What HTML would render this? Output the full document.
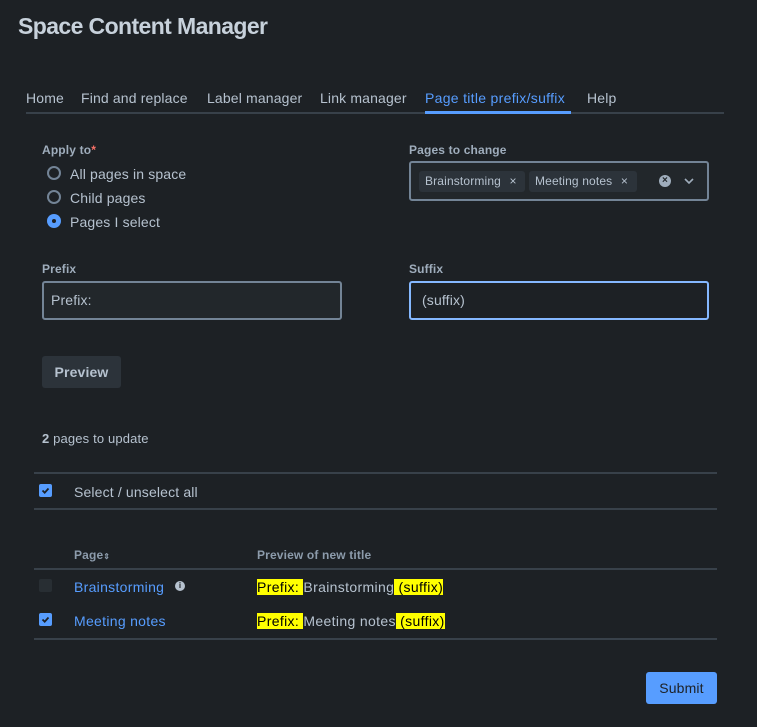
<!DOCTYPE html>
<html><head><style>
body{margin:0;width:757px;height:727px;background:#1d2125;font-family:"Liberation Sans",sans-serif;color:#b6c2cf;position:relative;overflow:hidden;font-size:14px;letter-spacing:0.15px}
.a{position:absolute;white-space:nowrap}
.lbl{font-size:12px;font-weight:bold;color:#9fadbc}
.radio{position:absolute;width:10px;height:10px;border:2px solid #738496;border-radius:50%}
.inp{position:absolute;height:36px;border:2px solid #738496;border-radius:3px;box-sizing:border-box;padding:0 8px;line-height:32px;color:#b6c2cf;background:#22272b}
.line{position:absolute;left:34px;width:683px;height:2px;background:#38414a}
.cb{position:absolute;width:13px;height:13px;border-radius:2px;background:#579dff}
.cb svg{position:absolute;left:0;top:0}
.hl{background:#ff0;color:#000}
.link{color:#579dff}
.tag{position:absolute;top:171px;height:21px;background:#2c333a;border-radius:3px;font-size:12px;line-height:21px;padding-left:6px;box-sizing:border-box}
</style></head><body>
<div class="a" style="left:18px;top:13px;font-size:23px;color:#c7d1db;font-weight:bold;letter-spacing:-0.6px">Space Content Manager</div>
<div class="a" style="left:26px;top:90px">Home</div>
<div class="a" style="left:81px;top:90px">Find and replace</div>
<div class="a" style="left:207px;top:90px">Label manager</div>
<div class="a" style="left:320px;top:90px">Link manager</div>
<div class="a" style="left:425px;top:90px;color:#579dff;letter-spacing:0.3px">Page title prefix/suffix</div>
<div class="a" style="left:587px;top:90px">Help</div>
<div style="position:absolute;left:26px;top:112px;width:698px;height:2px;background:#38414a"></div>
<div style="position:absolute;left:425px;top:111px;width:146px;height:3px;background:#579dff"></div>

<div class="a lbl" style="left:42px;top:143px">Apply to<span style="color:#f87168">*</span></div>
<div class="radio" style="left:47px;top:166px"></div><div class="a" style="left:70px;top:166px">All pages in space</div>
<div class="radio" style="left:47px;top:190px"></div><div class="a" style="left:70px;top:190px">Child pages</div>
<div style="position:absolute;left:47px;top:214px;width:14px;height:14px;border-radius:50%;background:#579dff"><div style="position:absolute;left:5px;top:5px;width:4px;height:4px;border-radius:50%;background:#1d2125"></div></div>
<div class="a" style="left:70px;top:214px">Pages I select</div>

<div class="a lbl" style="left:409px;top:143px">Pages to change</div>
<div class="inp" style="left:409px;top:161px;width:300px;height:40px"></div>
<div class="tag" style="left:419px;width:106px">Brainstorming <span style="margin-left:5px">×</span></div>
<div class="tag" style="left:529px;width:108px">Meeting notes <span style="margin-left:5px">×</span></div>
<div style="position:absolute;left:659px;top:175px;width:12px;height:12px;border-radius:50%;background:#9fadbc;color:#22272b;font-size:10px;line-height:12px;text-align:center;font-weight:bold">×</div>
<svg style="position:absolute;left:684px;top:178px" width="10" height="7"><path d="M1 1 L5 5 L9 1" stroke="#9fadbc" stroke-width="1.6" fill="none"/></svg>

<div class="a lbl" style="left:42px;top:262px">Prefix</div>
<div class="inp" style="left:42px;top:281px;width:300px;height:39px;line-height:35px;padding-left:7px">Prefix:</div>
<div class="a lbl" style="left:409px;top:262px">Suffix</div>
<div class="inp" style="left:409px;top:281px;width:300px;height:39px;line-height:35px;border-color:#85b8ff;background:#1d2125;padding-left:11px">(suffix)</div>

<div class="a" style="left:42px;top:356px;width:79px;height:32px;background:#2c333a;border-radius:3px;font-weight:bold;line-height:32px;text-align:center">Preview</div>

<div class="a" style="left:42px;top:431px;font-size:13px"><b>2</b> pages to update</div>
<div class="line" style="top:472px"></div>
<div class="cb" style="left:39px;top:484px"><svg width="13" height="13"><path d="M3.5 6.5 L5.7 8.7 L9.5 4.5" stroke="#1d2125" stroke-width="1.8" fill="none"/></svg></div>
<div class="a" style="left:74px;top:484px">Select / unselect all</div>
<div class="line" style="top:508px"></div>

<div class="a lbl" style="left:74px;top:548px;color:#8c9bab">Page<span style="font-size:8px">⇕</span></div>
<div class="a lbl" style="left:257px;top:548px;color:#8c9bab">Preview of new title</div>
<div class="line" style="top:568px"></div>
<div style="position:absolute;left:39px;top:579px;width:13px;height:13px;border-radius:2px;background:#282e33"></div>
<div class="a link" style="left:74px;top:579px;letter-spacing:0.3px">Brainstorming</div>
<div style="position:absolute;left:175px;top:581px;width:10px;height:10px;border-radius:50%;background:#b6c2cf;color:#1d2125;font-size:8px;font-weight:bold;text-align:center;line-height:10px">i</div>
<div class="a" style="left:257px;top:579px;letter-spacing:0.35px"><span class="hl">Prefix: </span>Brainstorming<span class="hl"> (suffix)</span></div>
<div class="cb" style="left:39px;top:613px"><svg width="13" height="13"><path d="M3.5 6.5 L5.7 8.7 L9.5 4.5" stroke="#1d2125" stroke-width="1.8" fill="none"/></svg></div>
<div class="a link" style="left:74px;top:613px;letter-spacing:0.3px">Meeting notes</div>
<div class="a" style="left:257px;top:613px;letter-spacing:0.35px"><span class="hl">Prefix: </span>Meeting notes<span class="hl"> (suffix)</span></div>
<div class="line" style="top:638px"></div>

<div class="a" style="left:646px;top:672px;width:71px;height:32px;background:#579dff;border-radius:3px;color:#1d2125;line-height:32px;text-align:center">Submit</div>
</body></html>
